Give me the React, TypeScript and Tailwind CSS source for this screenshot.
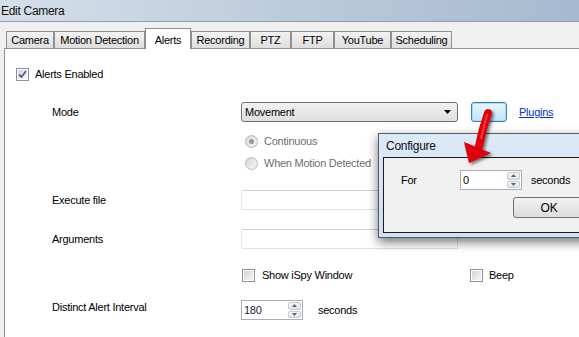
import React from "react";

const TABS = [
  { label: "Camera", w: "w-[48px]" },
  { label: "Motion Detection", w: "w-[91px]" },
  { label: "Alerts", w: "w-[46px]", active: true },
  { label: "Recording", w: "w-[59px]" },
  { label: "PTZ", w: "w-[41px]" },
  { label: "FTP", w: "w-[43px]" },
  { label: "YouTube", w: "w-[57px]" },
  { label: "Scheduling", w: "w-[61px]" },
];

const CheckBox = ({ checked = false }: { checked?: boolean }) => (
  <span className="w-[13px] h-[13px] shrink-0 border border-[#8e8f8f] bg-white p-[1px] flex">
    <span className="flex-1 bg-gradient-to-br from-[#cfd3d9] to-[#f7f7f7] flex items-center justify-center">
      {checked && (
        <svg width="9" height="9" viewBox="0 0 9 9">
          <path d="M1 4.5 L3.5 7 L8 1" fill="none" stroke="#4a5e9c" strokeWidth="1.8" />
        </svg>
      )}
    </span>
  </span>
);

const Radio = ({ checked = false }: { checked?: boolean }) => (
  <span className="w-[13px] h-[13px] shrink-0 rounded-full border border-[#b9b9b9] bg-gradient-to-br from-[#d8d8d8] to-[#f4f4f4] flex items-center justify-center">
    {checked && <span className="w-[5px] h-[5px] rounded-full bg-[#9a9a9a]" />}
  </span>
);

const Spin = () => (
  <span className="w-[14px] h-full flex flex-col gap-px py-px pr-px">
    <span className="flex-1 rounded-[2px] border border-[#c4c9d0] bg-gradient-to-b from-[#f4f6f8] to-[#e2e7ec] flex items-center justify-center">
      <svg width="5" height="3" viewBox="0 0 5 3"><path d="M0 3 L2.5 0 L5 3Z" fill="#4d6185" /></svg>
    </span>
    <span className="flex-1 rounded-[2px] border border-[#c4c9d0] bg-gradient-to-b from-[#f4f6f8] to-[#e2e7ec] flex items-center justify-center">
      <svg width="5" height="3" viewBox="0 0 5 3"><path d="M0 0 L2.5 3 L5 0Z" fill="#4d6185" /></svg>
    </span>
  </span>
);

const TextBox = () => (
  <div className="w-[217px] h-[20px] rounded-[2px] border border-[#dfe2e6] border-t-[#cdd0d5] bg-white" />
);

export default function App() {
  return (
    <div className="relative w-[579px] h-[337px] overflow-hidden bg-[#f0f0f0] text-[11px] tracking-[-0.25px] text-black font-['Liberation_Sans',Arial,sans-serif] flex flex-col">
      {/* window title */}
      <div className="h-[22px] shrink-0 border-b border-[#8d9cb0] bg-gradient-to-r from-[#d5dfea] via-[#bccbdc] to-[#a6b9d0] flex items-center pl-[1px] text-[12px] tracking-[-0.3px] text-[#111]">
        Edit Camera
      </div>

      {/* tabs */}
      <div className="h-[26px] shrink-0 flex items-end pl-[6px]">
        {TABS.map((t) =>
          t.active ? (
            <div
              key={t.label}
              className={`${t.w} h-[21px] -mb-px z-10 border border-b-0 border-[#8e8f8f] bg-white flex items-start justify-center pt-[3px]`}
            >
              {t.label}
            </div>
          ) : (
            <div
              key={t.label}
              className={`${t.w} h-[17px] border border-b-0 border-[#8e8f8f] bg-gradient-to-b from-[#f3f3f3] to-[#dedede] flex items-center justify-center`}
            >
              {t.label}
            </div>
          )
        )}
      </div>

      {/* tab page */}
      <div className="flex-1 ml-[4px] border-l border-t border-[#8e8f8f] bg-white flex flex-col pt-[15px]">
        <div className="h-[20px] flex items-center pl-[11px] gap-[6px]">
          <CheckBox checked />
          <span>Alerts Enabled</span>
        </div>

        <div className="h-[20px] mt-[18px] flex items-center pl-[47px]">
          <span className="w-[189px]">Mode</span>
          <div className="w-[217px] h-[20px] rounded-[3px] border border-[#707070] bg-gradient-to-b from-[#f2f2f2] to-[#dfdfdf] flex items-center pl-[3px] pr-[6px] justify-between">
            <span>Movement</span>
            <svg width="7" height="4" viewBox="0 0 7 4"><path d="M0 0 L7 0 L3.5 4Z" fill="#000" /></svg>
          </div>
          <div className="ml-[13px] w-[36px] h-[20px] rounded-[3px] border border-[#3c7fb1] bg-gradient-to-b from-[#eaf6fd] to-[#bee6fd] shadow-[inset_0_0_0_1px_#a8dbf7]" />
          <span className="ml-[12px] text-[#0033cc] underline">Plugins</span>
        </div>

        <div className="h-[20px] mt-[9px] flex items-center pl-[240px] gap-[6px] text-[#6d6d6d]">
          <Radio checked />
          <span>Continuous</span>
        </div>
        <div className="h-[20px] mt-[2px] flex items-center pl-[240px] gap-[6px] text-[#6d6d6d]">
          <Radio />
          <span>When Motion Detected</span>
        </div>

        <div className="h-[20px] mt-[17px] flex items-center pl-[47px]">
          <span className="w-[189px]">Execute file</span>
          <TextBox />
        </div>
        <div className="h-[20px] mt-[19px] flex items-center pl-[47px]">
          <span className="w-[189px]">Arguments</span>
          <TextBox />
        </div>

        <div className="h-[20px] mt-[16px] flex items-center pl-[237px]">
          <CheckBox />
          <span className="ml-[7px] w-[208px]">Show iSpy Window</span>
          <CheckBox />
          <span className="ml-[6px]">Beep</span>
        </div>

        <div className="h-[20px] mt-[15px] flex items-center pl-[47px]">
          <span className="w-[189px] -mt-[5px]">Distinct Alert Interval</span>
          <div className="w-[62px] h-[20px] border border-[#abadb3] bg-white flex items-center">
            <span className="flex-1 pl-[2px] text-[#1a1a4a]">180</span>
            <Spin />
          </div>
          <span className="ml-[15px]">seconds</span>
        </div>
      </div>

      {/* configure dialog */}
      <div className="absolute left-[378px] top-[133px] w-[230px] h-[105px] border border-[#4f5b69] bg-gradient-to-b from-[#dce9f7] to-[#cfe0f3] shadow-[0_4px_10px_rgba(0,0,0,0.55)] flex flex-col">
        <div className="h-[23px] shrink-0 flex items-center pl-[7px] text-[12px] text-[#111]">Configure</div>
        <div className="ml-[4px] h-[76px] border border-[#1b1b1b] bg-[#f0f0f0] flex flex-col">
          <div className="h-[20px] mt-[12px] flex items-center pl-[17px]">
            <span className="w-[59px]">For</span>
            <div className="w-[62px] h-[20px] border border-[#abadb3] bg-white flex items-center">
              <span className="flex-1 pl-[2px]">0</span>
              <Spin />
            </div>
            <span className="ml-[9px]">seconds</span>
          </div>
          <div className="mt-[7px] ml-[129px] w-[72px] h-[21px] rounded-[3px] border border-[#707070] bg-gradient-to-b from-[#f2f2f2] to-[#dcdcdc] flex items-center justify-center text-[12px]">
            OK
          </div>
        </div>
      </div>

      {/* red arrow annotation */}
      <svg className="absolute inset-0 pointer-events-none" width="579" height="337" viewBox="0 0 579 337">
        <defs>
          <filter id="sh" x="-50%" y="-50%" width="200%" height="200%">
            <feGaussianBlur stdDeviation="1.5" />
          </filter>
        </defs>
        <g opacity="0.5" filter="url(#sh)" transform="translate(2 2)">
          <path d="M488 113 Q482 130 479 146" fill="none" stroke="#000" strokeWidth="8" strokeLinecap="round" />
          <path d="M464 142 L491 153 L469 163Z" fill="#000" />
        </g>
        <path d="M488 113 Q482 130 479 146" fill="none" stroke="#e0000c" strokeWidth="8" strokeLinecap="round" />
        <path d="M464 142 L491 153 L469 163Z" fill="#e0000c" />
        <path d="M487 115 L481 138" stroke="#ff5b5b" strokeWidth="2" strokeLinecap="round" opacity="0.6" />
      </svg>
    </div>
  );
}
